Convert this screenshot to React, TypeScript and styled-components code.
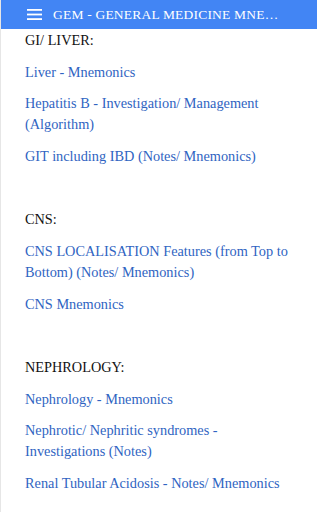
import React from "react";
import styled, { createGlobalStyle } from "styled-components";

const GlobalStyle = createGlobalStyle`
  html, body {
    margin: 0;
    padding: 0;
    background: #fff;
  }
`;

const Page = styled.div`
  width: 317px;
  height: 512px;
  overflow: hidden;
  border-left: 1px solid #e6e6e6;
  box-sizing: border-box;
  background: #fff;
`;

const Toolbar = styled.header`
  height: 29px;
  background: #4285f4;
  display: flex;
  align-items: center;
  padding-left: 26px;
  gap: 11px;
  color: #fff;
`;

const Title = styled.h1`
  margin: 0;
  font-family: "Liberation Serif", serif;
  font-weight: normal;
  font-size: 13.5px;
  letter-spacing: 0.2px;
  white-space: nowrap;
  overflow: hidden;
  text-overflow: ellipsis;
  width: 232px;
`;

const Content = styled.main`
  width: 270px;
  padding: 1px 0 0 24px;
  font-family: "Liberation Serif", serif;
  font-size: 14.3px;
  line-height: 21px;
`;

const Heading = styled.p`
  margin: 0 0 10.6px;
  color: #111;
`;

const Item = styled.p`
  margin: 0 0 10.6px;
`;

const Spacer = styled.div`
  height: 32px;
`;

const ItemLink = styled.a`
  color: #2f64c2;
  text-decoration: none;
`;

const sections = [
  {
    title: "GI/ LIVER:",
    links: [
      "Liver - Mnemonics",
      "Hepatitis B - Investigation/ Management (Algorithm)",
      "GIT including IBD (Notes/ Mnemonics)",
    ],
  },
  {
    title: "CNS:",
    links: [
      "CNS LOCALISATION Features (from Top to Bottom) (Notes/ Mnemonics)",
      "CNS Mnemonics",
    ],
  },
  {
    title: "NEPHROLOGY:",
    links: [
      "Nephrology - Mnemonics",
      "Nephrotic/ Nephritic syndromes - Investigations (Notes)",
      "Renal Tubular Acidosis - Notes/ Mnemonics",
    ],
  },
];

function Menu() {
  return (
    <svg width="15" height="11" viewBox="0 0 15 11">
      <rect x="0" y="0" width="15" height="1.8" fill="#fff" />
      <rect x="0" y="4.6" width="15" height="1.8" fill="#fff" />
      <rect x="0" y="9.2" width="15" height="1.8" fill="#fff" />
    </svg>
  );
}

export default function App() {
  return (
    <Page>
      <GlobalStyle />
      <Toolbar>
        <Menu />
        <Title>GEM - GENERAL MEDICINE MNEMONICS</Title>
      </Toolbar>
      <Content>
        {sections.map((s, i) => (
          <section key={s.title}>
            <Heading>{s.title}</Heading>
            {s.links.map((l) => (
              <Item key={l}>
                <ItemLink href="#">{l}</ItemLink>
              </Item>
            ))}
            {i < sections.length - 1 && <Spacer />}
          </section>
        ))}
      </Content>
    </Page>
  );
}
